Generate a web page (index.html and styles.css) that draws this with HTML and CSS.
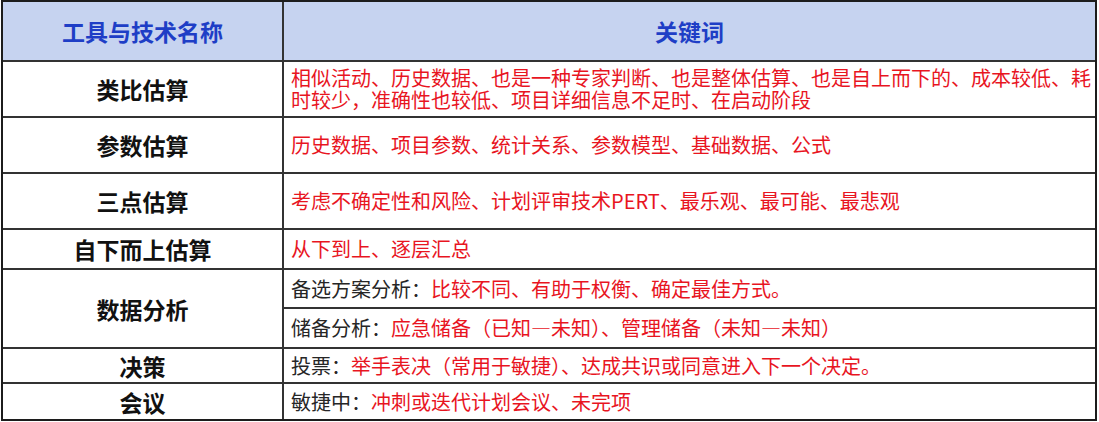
FILE: index.html
```html
<!DOCTYPE html>
<html lang="zh-CN">
<head>
<meta charset="utf-8">
<title>工具与技术</title>
<link rel="stylesheet" href="styles.css">
</head>
<body>
<div class="sheet">
  <div class="hd hd-left">工具与技术名称</div>
  <div class="hd hd-right">关键词</div>

  <div class="name r1">类比估算</div>
  <div class="kw r1"><span class="red">相似活动、历史数据、也是一种专家判断、也是整体估算、也是自上而下的、成本较低、耗时较少，准确性也较低、项目详细信息不足时、在启动阶段</span></div>

  <div class="name r2">参数估算</div>
  <div class="kw r2"><span class="red">历史数据、项目参数、统计关系、参数模型、基础数据、公式</span></div>

  <div class="name r3">三点估算</div>
  <div class="kw r3"><span class="red">考虑不确定性和风险、计划评审技术PERT、最乐观、最可能、最悲观</span></div>

  <div class="name r4">自下而上估算</div>
  <div class="kw r4"><span class="red">从下到上、逐层汇总</span></div>

  <div class="name r5">数据分析</div>
  <div class="kw r5a">备选方案分析：<span class="red">比较不同、有助于权衡、确定最佳方式。</span></div>
  <div class="kw r5b">储备分析：<span class="red">应急储备（已知—未知）、管理储备（未知—未知）</span></div>

  <div class="name r6">决策</div>
  <div class="kw r6">投票：<span class="red">举手表决（常用于敏捷）、达成共识或同意进入下一个决定。</span></div>

  <div class="name r7">会议</div>
  <div class="kw r7">敏捷中：<span class="red">冲刺或迭代计划会议、未完项</span></div>
</div>
</body>
</html>
```

FILE: styles.css
```css
html, body {
  margin: 0;
  padding: 0;
  background: #ffffff;
}

body {
  font-family: "Noto Sans CJK SC", "Noto Sans", sans-serif;
}

.sheet {
  margin-left: 1px;
  width: 1092px;
  border: 2px solid #1c1c1c;
  background: #333333;
  display: grid;
  grid-template-columns: 279px 811px;
  grid-template-rows: 58px 54px 54px 54px 38px 37px 38px 33px 35px;
  gap: 2px;
}

.sheet > div {
  background: #ffffff;
  display: flex;
  align-items: center;
}

.hd {
  justify-content: center;
  font-size: 23px;
  font-weight: 700;
  color: #1e3ec6;
  background-color: #c6d3f0 !important;
  background-image:
    radial-gradient(circle at 30% 40%, rgba(222, 200, 238, 0.75) 0, rgba(222, 200, 238, 0) 9px),
    radial-gradient(circle at 70% 60%, rgba(236, 242, 252, 0.7) 0, rgba(236, 242, 252, 0) 7px),
    radial-gradient(circle at 50% 50%, rgba(212, 196, 236, 0.6) 0, rgba(212, 196, 236, 0) 12px),
    radial-gradient(circle at 20% 80%, rgba(180, 200, 236, 0.7) 0, rgba(180, 200, 236, 0) 6px),
    radial-gradient(circle at 60% 20%, rgba(240, 236, 250, 0.6) 0, rgba(240, 236, 250, 0) 5px),
    radial-gradient(circle at 12% 30%, rgba(220, 200, 240, 0.6) 0, rgba(220, 200, 240, 0) 40px),
    radial-gradient(circle at 60% 25%, rgba(214, 196, 236, 0.5) 0, rgba(214, 196, 236, 0) 60px);
  background-size: 37px 29px, 23px 31px, 53px 41px, 19px 17px, 13px 11px, 100% 100%, 100% 100%;
}

.name {
  justify-content: center;
  font-size: 23px;
  font-weight: 700;
  color: #111111;
}

.kw {
  padding: 0 1px 0 7px;
  font-size: 20px;
  line-height: 22px;
  color: #262626;
}

.red {
  color: #e8151f;
}

.name.r5 {
  grid-row: span 2;
}
```
